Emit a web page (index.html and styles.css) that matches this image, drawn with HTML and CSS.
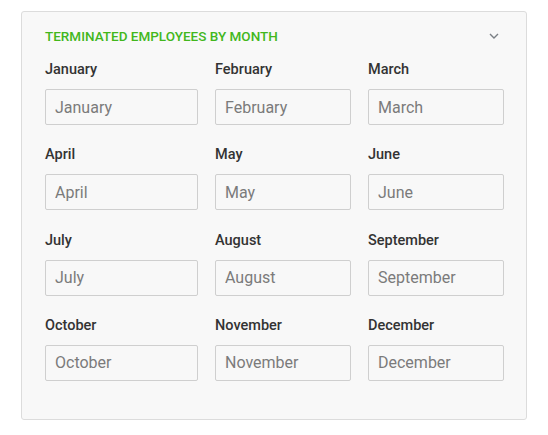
FILE: index.html
```html
<!DOCTYPE html>
<html>
<head>
<meta charset="utf-8">
<link rel="stylesheet" href="styles.css">
</head>
<body>
<div class="card">
  <div class="card-header">
    <h3 class="title">TERMINATED EMPLOYEES BY MONTH</h3>
    <svg class="chevron" width="10" height="6" viewBox="0 0 10 6"><path d="M1 1 L5 5 L9 1" fill="none" stroke="#7a7f85" stroke-width="1.4"/></svg>
  </div>
  <div class="grid">
    <div class="field"><label class="label">January</label><input class="input" placeholder="January"></div>
    <div class="field"><label class="label">February</label><input class="input" placeholder="February"></div>
    <div class="field"><label class="label">March</label><input class="input" placeholder="March"></div>
    <div class="field"><label class="label">April</label><input class="input" placeholder="April"></div>
    <div class="field"><label class="label">May</label><input class="input" placeholder="May"></div>
    <div class="field"><label class="label">June</label><input class="input" placeholder="June"></div>
    <div class="field"><label class="label">July</label><input class="input" placeholder="July"></div>
    <div class="field"><label class="label">August</label><input class="input" placeholder="August"></div>
    <div class="field"><label class="label">September</label><input class="input" placeholder="September"></div>
    <div class="field"><label class="label">October</label><input class="input" placeholder="October"></div>
    <div class="field"><label class="label">November</label><input class="input" placeholder="November"></div>
    <div class="field"><label class="label">December</label><input class="input" placeholder="December"></div>
  </div>
</div>
</body>
</html>
```
FILE: styles.css
```css
html, body {
  margin: 0;
  padding: 0;
  background: #ffffff;
}
body {
  padding: 11px 21px 0 21px;
  font-family: Roboto, "Liberation Sans", Arial, sans-serif;
}
.card {
  width: 506px;
  box-sizing: border-box;
  background: #f8f8f8;
  border: 1px solid #dcdcdc;
  border-radius: 3px;
  padding: 14px 23px 38px 23px;
}
.card-header {
  display: flex;
  justify-content: space-between;
  align-items: center;
  margin-bottom: 14px;
}
.title {
  margin: 0;
  font-size: 13.5px;
  line-height: 20px;
  font-weight: 500;
  color: #42b71c;
}
.chevron {
  display: block;
  margin-right: 4px;
}
.grid {
  display: grid;
  grid-template-columns: 153px 136px 136px;
  column-gap: 17px;
  row-gap: 20.33px;
}
.field {
  display: flex;
  flex-direction: column;
}
.label {
  font-size: 14.5px;
  line-height: 20px;
  font-weight: 500;
  color: #333333;
  margin-bottom: 9px;
}
.input {
  box-sizing: border-box;
  height: 36px;
  width: 100%;
  margin: 0;
  padding: 0 9px;
  border: 1px solid #cfcfcf;
  border-radius: 2px;
  background: #f8f8f8;
  font-family: Roboto, "Liberation Sans", Arial, sans-serif;
  font-size: 16px;
  color: #333;
  outline: none;
}
.input::placeholder {
  color: #7b7b7b;
  opacity: 1;
}
```
